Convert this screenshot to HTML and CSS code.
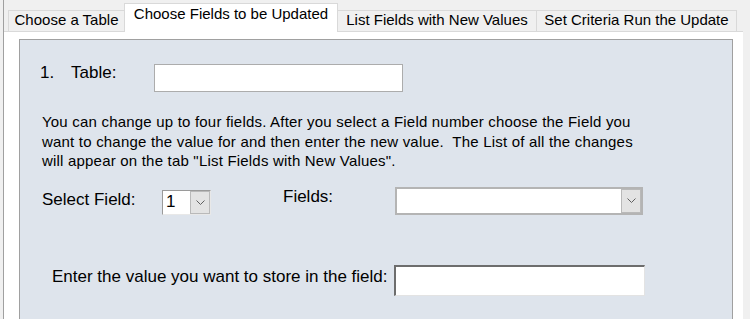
FILE: index.html
```html
<!DOCTYPE html>
<html lang="en">
<head>
    <meta charset="UTF-8">
    <title>Update Query Wizard</title>
    <link rel="stylesheet" href="styles.css">
</head>
<body>

    <div class="window">
        <!-- Tab strip -->
        <div class="tabs">
            <div class="tab tab-table">Choose a Table</div>
            <div class="tab tab-fields active">Choose Fields to be Updated</div>
            <div class="tab tab-list">List Fields with New Values</div>
            <div class="tab tab-run">Set Criteria Run the Update</div>
        </div>

        <!-- Tab page -->
        <div class="page">
            <div class="group">
                <div class="row-table">
                    <span class="num">1.</span>
                    <span class="label table-label">Table:</span>
                    <div class="textbox table-box"></div>
                </div>

                <p class="help">
                    You can change up to four fields. After you select a Field number choose the Field you<br>
                    want to change the value for and then enter the new value.&nbsp; The List of all the changes<br>
                    will appear on the tab "List Fields with New Values".
                </p>

                <div class="row-select">
                    <span class="label select-label">Select Field:</span>
                    <div class="combo combo-num">
                        <span class="combo-text">1</span>
                        <span class="combo-btn">
                            <svg width="9" height="5" viewBox="0 0 9 5"><polyline points="0.5,0.5 4.5,4.5 8.5,0.5" fill="none" stroke="#606060" stroke-width="1"/></svg>
                        </span>
                    </div>
                    <span class="label fields-label">Fields:</span>
                    <div class="combo combo-fields">
                        <span class="combo-text"></span>
                        <span class="combo-btn">
                            <svg width="9" height="5" viewBox="0 0 9 5"><polyline points="0.5,0.5 4.5,4.5 8.5,0.5" fill="none" stroke="#606060" stroke-width="1"/></svg>
                        </span>
                    </div>
                </div>

                <div class="row-value">
                    <span class="label value-label">Enter the value you want to store in the field:</span>
                    <div class="value-box"></div>
                </div>
            </div>
        </div>
    </div>

</body>
</html>
```

FILE: styles.css
```css
* { box-sizing: border-box; }

body {
    margin: 0;
    background: #f0f0f0;
    font-family: "Liberation Sans", Arial, sans-serif;
    color: #000;
    overflow: hidden;
}

.window {
    margin-left: 3px;
    border-left: 1px solid #a0a0a0;
    height: 319px;
    padding-top: 3px;
    overflow: hidden;
}

/* Tabs */
.tabs {
    display: flex;
    align-items: flex-end;
    height: 28px;
    margin-left: 4px;
}

.tab {
    height: 21px;
    border: 1px solid #d9d9d9;
    border-bottom: none;
    background: #f0f0f0;
    font-size: 15px;
    line-height: 17px;
    text-align: center;
    white-space: nowrap;
}

.tab-table { width: 116px; border-right: none; }
.tab-fields { width: 214px; }
.tab-list { width: 199px; border-left: none; }
.tab-run { width: 200px; border-left: none; }

.tab.active {
    position: relative;
    z-index: 1;
    height: 29px;
    margin-bottom: -1px;
    background: #fff;
    padding-top: 1px;
}

/* Page */
.page {
    width: 739px;
    height: 300px;
    background: #fff;
    border-top: 1px solid #d9d9d9;
    padding: 7px 10px 0 15px;
}

.group {
    width: 714px;
    height: 300px;
    background: #dee4ec;
    border: 1px solid #a0a0a0;
}

.label {
    font-size: 17px;
    line-height: 17px;
    white-space: nowrap;
}

/* Row 1 */
.row-table {
    display: flex;
    align-items: flex-start;
    margin-top: 24px;
    padding-left: 20px;
}

.num {
    width: 31px;
    font-size: 17px;
    line-height: 17px;
}

.table-label { width: 83px; }

.textbox {
    background: #fff;
    border: 1px solid #acacac;
}

.table-box {
    width: 249px;
    height: 28px;
}

/* Help text */
.help {
    margin: 20px 0 0 22px;
    font-size: 15px;
    letter-spacing: 0.2px;
    line-height: 19.5px;
    white-space: nowrap;
}

/* Row 2 */
.row-select {
    display: flex;
    align-items: flex-start;
    margin-top: 16px;
    padding-left: 22px;
}

.select-label {
    width: 120px;
    margin-top: 4px;
}

.combo {
    display: flex;
    background: #fff;
    border: 1px solid #a9a9a9;
}

.combo-text {
    flex: 1;
    font-size: 17px;
    line-height: 22px;
    padding-left: 3px;
}

.combo-btn {
    display: flex;
    align-items: center;
    justify-content: center;
    background: #e3e3e3;
    border: 1px solid #b9b9b9;
}

.combo-num {
    width: 49px;
    height: 25px;
    margin-top: 3px;
    border-color: #9a9a9a #e8e8e8 #e8e8e8 #9a9a9a;
}

.combo-num .combo-btn { width: 20px; }

.fields-label {
    width: 112px;
    margin-left: 72px;
    margin-top: 1px;
}

.combo-fields {
    width: 248px;
    height: 28px;
    border-width: 2px;
    border-color: #b4b4b4;
}

.combo-fields .combo-btn { width: 20px; }

/* Row 3 */
.row-value {
    display: flex;
    align-items: flex-start;
    margin-top: 50px;
    padding-left: 32px;
}

.value-label {
    width: 342px;
    margin-top: 3px;
}

.value-box {
    width: 251px;
    height: 31px;
    background: #fff;
    border-style: solid;
    border-width: 2px 1px 1px 2px;
    border-color: #6d6d6d #e3e3e3 #e3e3e3 #6d6d6d;
}
```
